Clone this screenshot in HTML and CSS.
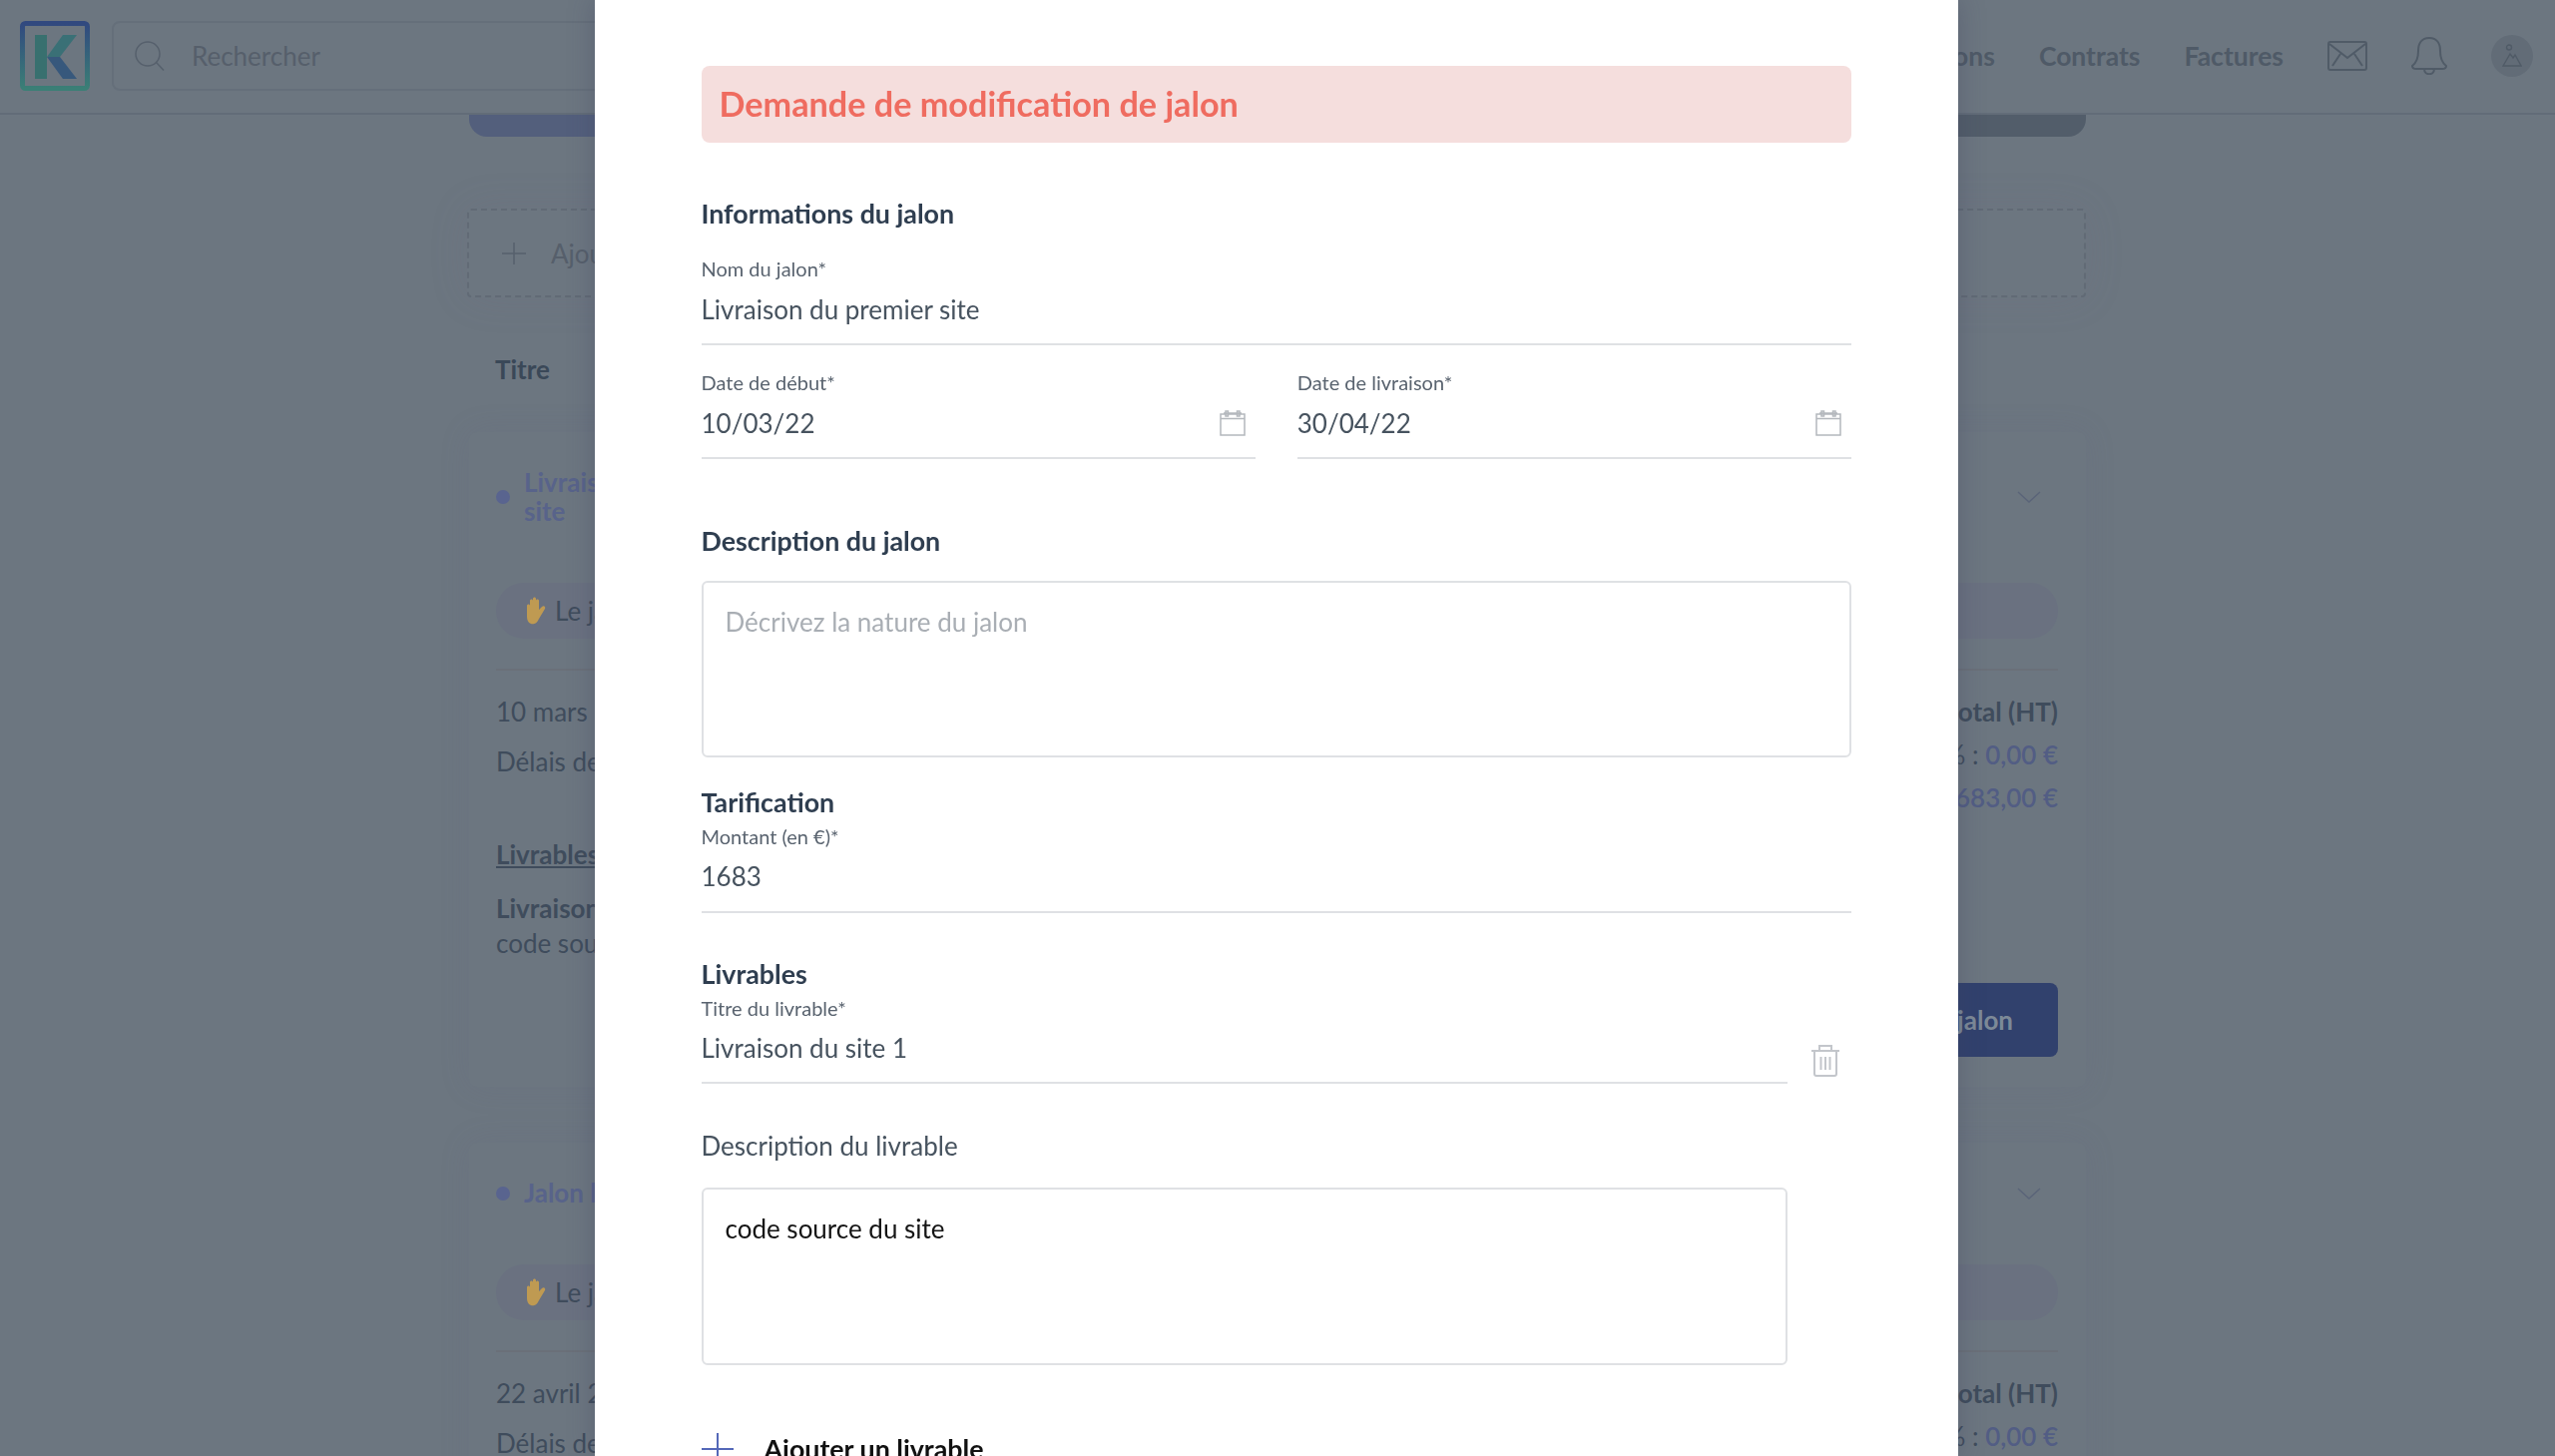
FILE: index.html
```html
<!DOCTYPE html>
<html lang="fr">
<head>
    <meta charset="UTF-8">
    <title>Demande de modification de jalon</title>
    <link rel="stylesheet" href="styles.css">
</head>
<body>
    <header class="topbar">
        <svg class="logo" width="70" height="70" viewBox="0 0 70 70">
            <defs>
                <linearGradient id="cadre" x1="0" y1="0" x2="0" y2="1">
                    <stop offset="0" stop-color="#31497f"/>
                    <stop offset="1" stop-color="#3b7f76"/>
                </linearGradient>
            </defs>
            <rect x="2.5" y="2.5" width="65" height="65" rx="3" fill="none" stroke="url(#cadre)" stroke-width="5"/>
            <rect x="15" y="14" width="12" height="44" fill="#38706f"/>
            <polygon points="43,14 57,14 40,36 27,36" fill="#3a7076"/>
            <polygon points="27,36 40,36 57,58 43,58" fill="#37587c"/>
        </svg>
        <div class="search">
            <svg width="30" height="30" viewBox="0 0 30 30" fill="none" stroke="#56606c" stroke-width="1.5">
                <ellipse cx="13" cy="13" rx="12" ry="12"/>
                <line x1="21.5" y1="21.5" x2="29" y2="29.5"/>
            </svg>
            <span>Rechercher</span>
        </div>
        <nav class="nav">
            <a>Propositions</a>
            <a>Contrats</a>
            <a>Factures</a>
            <svg width="40" height="30" viewBox="0 0 40 30" fill="none" stroke="#505b67" stroke-width="2">
                <rect x="1" y="1" width="38" height="28" rx="2"/>
                <path d="M2 3 L20 17 L38 3 M5 25 L13 13 M35 25 L27 13"/>
            </svg>
            <svg width="36" height="38" viewBox="0 0 36 38" fill="none" stroke="#505b67" stroke-width="2">
                <path d="M18 1 C10 1 7 7 7 14 C7 22 5 26 1 29 C1 31 3 32 5 32 L31 32 C33 32 35 31 35 29 C31 26 29 22 29 14 C29 7 26 1 18 1 Z"/>
                <path d="M13 32 C13 39 23 39 23 32"/>
            </svg>
            <div class="avatar">
                <svg width="20" height="24" viewBox="0 0 20 24" fill="none" stroke="#505b67" stroke-width="1.4">
                    <circle cx="7" cy="3.5" r="2.5"/>
                    <path d="M1 22 L8 10 L11 14 L13 11 L19 22 Z"/>
                </svg>
            </div>
        </nav>
    </header>

    <main class="page">
        <div class="tabs">
            <div class="tab tab-blue"></div>
            <div class="tab tab-grey"></div>
        </div>

        <div class="add-box">
            <svg width="24" height="22" viewBox="0 0 24 22" stroke="#56606c" stroke-width="1.5">
                <line x1="12" y1="0" x2="12" y2="22"/>
                <line x1="0" y1="11" x2="24" y2="11"/>
            </svg>
            <span>Ajouter un jalon</span>
        </div>

        <div class="list-title">Titre</div>

        <section class="card">
            <div class="card-head">
                <span class="dot"></span>
                <span class="card-name">Livraison du premier<br>site</span>
                <svg class="chevron" width="24" height="12" viewBox="0 0 24 12" fill="none" stroke="#5a6478" stroke-width="1.4">
                    <path d="M1 1 L12 11 L23 1"/>
                </svg>
            </div>
            <div class="pill">
                <svg width="24" height="28" viewBox="0 0 24 28"><path d="M5 9 C5 7 8 7 8 9 L8 4 C8 2 11 2 11 4 L11 2 C11 0 14 0 14 2 L14 4 C14 2 17 2 17 4 L17 13 L20 10 C22 8 24 10 23 12 L17 22 C15 27 11 28 9 27 C6 26 5 23 5 20 Z" fill="#bf9a52"/></svg>
                <span>Le jalon est en attente de validation</span>
            </div>
            <div class="card-body">
                <div class="col-left">
                    <p>10 mars 2022 - 30 avril 2022</p>
                    <p class="delay">Délais de livraison : 51 jours</p>
                    <p class="deliv-title">Livrables</p>
                    <p class="deliv-name">Livraison du site 1</p>
                    <p class="deliv-desc">code source du site</p>
                </div>
                <div class="col-right">
                    <p class="total-title">Montant total (HT)</p>
                    <p class="total-line">Retenue 0 % : <b>0,00 €</b></p>
                    <p class="total-line">Total : <b>1 683,00 €</b></p>
                    <a class="btn">Modifier le jalon</a>
                </div>
            </div>
        </section>

        <section class="card">
            <div class="card-head">
                <span class="dot"></span>
                <span class="card-name">Jalon livraison</span>
                <svg class="chevron" width="24" height="12" viewBox="0 0 24 12" fill="none" stroke="#5a6478" stroke-width="1.4">
                    <path d="M1 1 L12 11 L23 1"/>
                </svg>
            </div>
            <div class="pill">
                <svg width="24" height="28" viewBox="0 0 24 28"><path d="M5 9 C5 7 8 7 8 9 L8 4 C8 2 11 2 11 4 L11 2 C11 0 14 0 14 2 L14 4 C14 2 17 2 17 4 L17 13 L20 10 C22 8 24 10 23 12 L17 22 C15 27 11 28 9 27 C6 26 5 23 5 20 Z" fill="#bf9a52"/></svg>
                <span>Le jalon est en attente de validation</span>
            </div>
            <div class="card-body">
                <div class="col-left">
                    <p>22 avril 2022 - 30 mai 2022</p>
                    <p class="delay">Délais de livraison : 38 jours</p>
                </div>
                <div class="col-right">
                    <p class="total-title">Montant total (HT)</p>
                    <p class="total-line">Retenue 0 % : <b>0,00 €</b></p>
                </div>
            </div>
        </section>
    </main>

    <div class="modal">
        <h1 class="modal-title">Demande de modification de jalon</h1>

        <h2 class="section-title first">Informations du jalon</h2>
        <div class="field field-first">
            <label>Nom du jalon*</label>
            <div class="value">Livraison du premier site</div>
        </div>
        <div class="dates">
            <div class="field">
                <label>Date de début*</label>
                <div class="value">
                    10/03/22
                    <svg class="cal" width="26" height="26" viewBox="0 0 26 26" fill="none" stroke="#b4b8bd" stroke-width="1.5">
                        <path d="M1 4 H25 V25 H1 Z M1 8.5 H25 M4 3 H22"/>
                        <rect x="6" y="1" width="2.5" height="5"/>
                        <rect x="17.5" y="1" width="2.5" height="5"/>
                    </svg>
                </div>
            </div>
            <div class="field">
                <label>Date de livraison*</label>
                <div class="value">
                    30/04/22
                    <svg class="cal" width="26" height="26" viewBox="0 0 26 26" fill="none" stroke="#b4b8bd" stroke-width="1.5">
                        <path d="M1 4 H25 V25 H1 Z M1 8.5 H25 M4 3 H22"/>
                        <rect x="6" y="1" width="2.5" height="5"/>
                        <rect x="17.5" y="1" width="2.5" height="5"/>
                    </svg>
                </div>
            </div>
        </div>

        <h2 class="section-title desc-title">Description du jalon</h2>
        <div class="textbox placeholder">Décrivez la nature du jalon</div>

        <h2 class="section-title tarif-title">Tarification</h2>
        <div class="field field-tight field-amount">
            <label>Montant (en €)*</label>
            <div class="value">1683</div>
        </div>

        <h2 class="section-title livr-title">Livrables</h2>
        <div class="livrable-row">
            <div class="field field-tight livrable-col">
                <label>Titre du livrable*</label>
                <div class="value">Livraison du site 1</div>
            </div>
            <svg class="trash" width="30" height="32" viewBox="0 0 30 32" fill="none" stroke="#c3c6cb" stroke-width="2">
                <path d="M1 6 H29 M9 6 V1 H21 V6"/>
                <path d="M4 6 V29 C4 30 5 31 6 31 H24 C25 31 26 30 26 29 V6"/>
                <path d="M10.5 12 V25 M15 12 V25 M19.5 12 V25"/>
            </svg>
        </div>

        <div class="sub-title">Description du livrable</div>
        <div class="textbox livrable-col filled">code source du site</div>

        <div class="add-livrable">
            <svg width="32" height="32" viewBox="0 0 32 32" stroke="#5468b8" stroke-width="2">
                <line x1="16" y1="0" x2="16" y2="32"/>
                <line x1="0" y1="16" x2="32" y2="16"/>
            </svg>
            <span>Ajouter un livrable</span>
        </div>
    </div>
</body>
</html>
```

FILE: styles.css
```css
* {
    box-sizing: border-box;
}
html, body {
    height: 100%;
}
body {
    margin: 0;
    height: 1459px;
    overflow: hidden;
    background: #6c7680;
    font-family: "Lato", "Open Sans", sans-serif;
    font-size: 26px;
    color: #3f4c5c;
}
p, h1, h2 {
    margin: 0;
}

/* page behind the modal */
.topbar {
    height: 115px;
    display: flex;
    align-items: center;
    padding: 0 22px 2px 20px;
    border-bottom: 2px solid #626c78;
}
.logo {
    flex: none;
}
.search {
    width: 800px;
    height: 70px;
    margin-left: 22px;
    display: flex;
    align-items: center;
    gap: 27px;
    padding-left: 21px;
    border: 2px solid #656f7a;
    border-radius: 8px;
    color: #565f6b;
}
.nav {
    margin-left: auto;
    display: flex;
    align-items: center;
    gap: 44px;
    color: #4f5a67;
    font-size: 26.5px;
    font-weight: 700;
}
.avatar {
    width: 42px;
    height: 42px;
    border-radius: 50%;
    background: #626c77;
    display: flex;
    align-items: center;
    justify-content: center;
}
.page {
    width: 1620px;
    margin-left: 470px;
}
.tabs {
    height: 22px;
    display: flex;
}
.tab {
    flex: 1;
    height: 22px;
}
.tab-blue {
    background: #535f7c;
    border-radius: 0 0 0 18px;
}
.tab-grey {
    background: #525d6a;
    border-radius: 0 0 18px 0;
}
.add-box {
    height: 89px;
    margin: 72px 0 0 -2px;
    display: flex;
    align-items: center;
    gap: 25px;
    padding-left: 33px;
    border: 2px dashed #616a75;
    border-radius: 4px;
    color: #565f6b;
    box-shadow: 0 0 40px rgba(112, 104, 130, 0.12);
}
.list-title {
    margin: 56px 0 0 26px;
    line-height: 32px;
    font-weight: 700;
    color: #3a4858;
}
.card {
    margin-top: 47px;
    height: 656px;
    padding: 36px 28px 30px 27px;
    box-shadow: 0 0 30px rgba(104, 104, 128, 0.15);
    border-radius: 8px;
}
.card + .card {
    margin-top: 56px;
}
.card-head {
    display: flex;
    align-items: center;
}
.dot {
    flex: none;
    width: 14px;
    height: 14px;
    border-radius: 50%;
    background: #59648f;
    margin-right: 14px;
}
.card-name {
    line-height: 29px;
    font-weight: 700;
    color: #58638a;
}
.chevron {
    margin-left: auto;
    margin-right: 17px;
}
.pill {
    height: 56px;
    margin-top: 57px;
    display: flex;
    align-items: center;
    gap: 9px;
    padding-left: 26px;
    border-radius: 28px;
    background: #6a7180;
}
.card-body {
    margin-top: 30px;
    padding-top: 25px;
    display: flex;
    justify-content: space-between;
    border-top: 2px solid #6a7079;
}
.card-body p {
    line-height: 32px;
}
.delay {
    margin-top: 18px;
}
.deliv-title {
    margin-top: 61px;
    font-weight: 700;
    text-decoration: underline;
}
.deliv-name {
    margin-top: 22px;
    font-weight: 700;
}
.deliv-desc {
    margin-top: 3px;
}
.col-right {
    display: flex;
    flex-direction: column;
    align-items: flex-end;
}
.total-title {
    font-weight: 700;
}
.total-line {
    margin-top: 11px;
}
.total-line b {
    font-weight: 600;
    color: #525d84;
}
.btn {
    width: 420px;
    height: 74px;
    margin-top: 170px;
    display: flex;
    align-items: center;
    justify-content: flex-end;
    padding-right: 45px;
    border-radius: 8px;
    background: #31416d;
    color: #7d8997;
    font-weight: 700;
}

/* modal */
.modal {
    position: fixed;
    top: 0;
    left: 596px;
    width: 1366px;
    height: 1459px;
    overflow: hidden;
    padding: 66px 107px 0 106.5px;
    background: #fff;
    box-shadow: 0 0 24px rgba(60, 62, 92, 0.35);
    color: #47535f;
}
.modal-title {
    height: 77px;
    padding-left: 18px;
    border-radius: 8px;
    background: #f5dedd;
    color: #ef6c60;
    font-size: 34.2px;
    font-weight: 700;
    line-height: 76px;
}
.section-title {
    color: #2f3e50;
    font-size: 26.8px;
    line-height: 32px;
    font-weight: 700;
}
.section-title.first {
    margin-top: 55px;
}
.desc-title {
    margin-top: 66px;
}
.tarif-title {
    margin-top: 29px;
}
.livr-title {
    margin-top: 45px;
}
.field label {
    display: block;
    line-height: 24px;
    font-size: 20px;
    color: #59636f;
}
.field {
    border-bottom: 2px solid #dfe1e4;
    padding-bottom: 18px;
    margin-top: 25px;
}
.field-first {
    margin-top: 27px;
}
.field-tight {
    margin-top: 6px;
}
.field-amount {
    padding-bottom: 19px;
}
.value {
    margin-top: 13px;
    line-height: 32px;
    display: flex;
    justify-content: space-between;
    align-items: center;
    font-size: 26px;
}
.field-tight .value {
    margin-top: 12px;
}
.cal {
    margin-right: 10px;
}
.dates {
    display: flex;
    gap: 42px;
}
.dates .field {
    flex: 1;
}
.textbox {
    height: 177px;
    margin-top: 24px;
    padding: 23px 22px;
    border: 2px solid #dfe1e4;
    border-radius: 6px;
    line-height: 32px;
}
.placeholder {
    color: #a9aeb4;
}
.filled {
    height: 178px;
    margin-top: 26px;
    color: #151515;
}
.livrable-row {
    display: flex;
    align-items: flex-end;
}
.livrable-col {
    width: 1088px;
}
.trash {
    margin: 0 0 7px 23px;
}
.sub-title {
    margin-top: 46px;
    line-height: 32px;
}
.add-livrable {
    margin-top: 68px;
    display: flex;
    align-items: center;
    gap: 31px;
    color: #111;
    font-size: 26.8px;
    font-weight: 700;
    line-height: 32px;
}
```
